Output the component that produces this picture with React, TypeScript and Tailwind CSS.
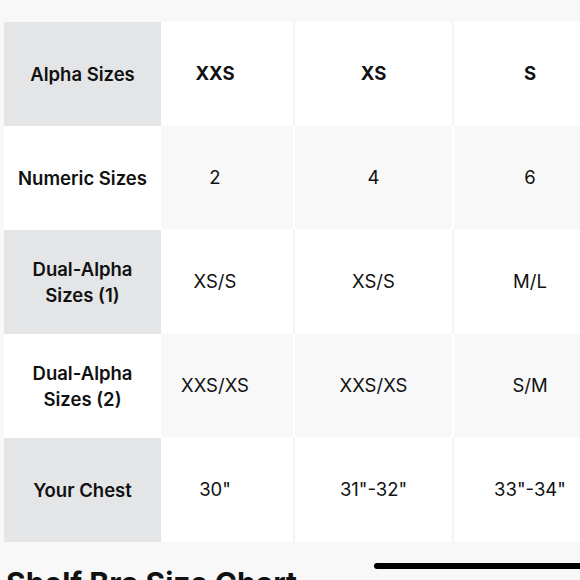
import React from 'react';

type Row = {
  label: string[];
  values: string[];
  shaded: boolean;
};

const rows: Row[] = [
  { label: ['Alpha Sizes'], values: ['XXS', 'XS', 'S'], shaded: false },
  { label: ['Numeric Sizes'], values: ['2', '4', '6'], shaded: true },
  { label: ['Dual-Alpha', 'Sizes (1)'], values: ['XS/S', 'XS/S', 'M/L'], shaded: false },
  { label: ['Dual-Alpha', 'Sizes (2)'], values: ['XXS/XS', 'XXS/XS', 'S/M'], shaded: true },
  { label: ['Your Chest'], values: ['30"', '31"-32"', '33"-34"'], shaded: false },
];

const SizeRow: React.FC<{ row: Row; header: boolean }> = ({ row, header }) => {
  const labelBg = row.shaded ? 'bg-white' : 'bg-[#e4e5e7]';
  const cellBg = row.shaded ? 'bg-[#f8f8f8]' : 'bg-white';
  const sep = row.shaded ? 'border-white' : 'border-[#f4f4f4]';
  const valueClass = header ? 'font-bold' : 'font-normal';

  return (
    <div className="flex h-[104px]">
      <div
        className={`w-[157px] shrink-0 flex flex-col items-center justify-center text-[18.5px] leading-[26px] font-semibold text-center ${labelBg}`}
      >
        {row.label.map((l) => (
          <span key={l}>{l}</span>
        ))}
      </div>
      <div className={`w-[132px] shrink-0 flex items-center justify-center pr-[24px] text-[18.5px] ${valueClass} ${cellBg}`}>
        {row.values[0]}
      </div>
      <div className={`w-[159px] shrink-0 flex items-center justify-center border-l-2 text-[18.5px] ${sep} ${valueClass} ${cellBg}`}>
        {row.values[1]}
      </div>
      <div className={`w-[157px] shrink-0 flex items-center justify-center border-l-2 pr-[3px] text-[18.5px] ${sep} ${valueClass} ${cellBg}`}>
        {row.values[2]}
      </div>
    </div>
  );
};

export default function App() {
  return (
    <div className="relative w-[580px] h-[580px] overflow-hidden bg-[#f8f8f8] text-[#111111] font-['Inter','Liberation_Sans',sans-serif]">
      <div className="pt-[22px] pl-[4px]">
        {rows.map((row, i) => (
          <SizeRow key={row.label.join(' ')} row={row} header={i === 0} />
        ))}
      </div>

      <h2 className="mt-[26px] pl-[6px] text-[30px] leading-[30px] font-bold whitespace-nowrap">
        Shelf Bra Size Chart
      </h2>

      {/* home indicator */}
      <div className="absolute left-[374px] top-[563px] w-[260px] h-[6px] rounded-full bg-black" />
    </div>
  );
}
